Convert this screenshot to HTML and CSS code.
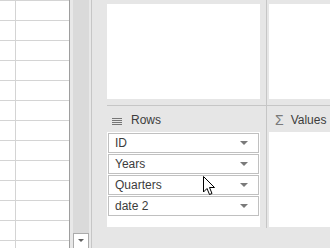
FILE: index.html
```html
<!DOCTYPE html>
<html lang="en">
<head>
    <meta charset="UTF-8">
    <title>PivotTable Fields</title>
    <link rel="stylesheet" href="styles.css">
</head>
<body>
    <div class="sheet">
        <div class="row"><div class="cell narrow"></div><div class="cell"></div></div>
        <div class="row"><div class="cell narrow"></div><div class="cell"></div></div>
        <div class="row"><div class="cell narrow"></div><div class="cell"></div></div>
        <div class="row"><div class="cell narrow"></div><div class="cell"></div></div>
        <div class="row"><div class="cell narrow"></div><div class="cell"></div></div>
        <div class="row"><div class="cell narrow"></div><div class="cell"></div></div>
        <div class="row"><div class="cell narrow"></div><div class="cell"></div></div>
        <div class="row"><div class="cell narrow"></div><div class="cell"></div></div>
        <div class="row"><div class="cell narrow"></div><div class="cell"></div></div>
        <div class="row"><div class="cell narrow"></div><div class="cell"></div></div>
        <div class="row"><div class="cell narrow"></div><div class="cell"></div></div>
        <div class="row"><div class="cell narrow"></div><div class="cell"></div></div>
        <div class="row"><div class="cell narrow"></div><div class="cell"></div></div>
    </div>

    <div class="scrollbar">
        <div class="track"></div>
        <div class="scroll-btn"><span class="arrow small"></span></div>
    </div>

    <div class="panel">
        <div class="areas top">
            <div class="drop-box"></div>
            <div class="divider"></div>
            <div class="drop-box"></div>
        </div>
        <div class="hline"></div>
        <div class="areas bottom">
            <div class="area">
                <div class="area-head">
                    <span class="rows-icon"><i></i><i></i><i></i><i></i></span>
                    <span>Rows</span>
                </div>
                <div class="field-list">
                    <div class="field">ID<span class="arrow"></span></div>
                    <div class="field">Years<span class="arrow"></span></div>
                    <div class="field">Quarters<span class="arrow"></span></div>
                    <div class="field">date 2<span class="arrow"></span></div>
                </div>
            </div>
            <div class="divider"></div>
            <div class="area grow">
                <div class="area-head">
                    <span class="sigma">&Sigma;</span>
                    <span class="label">Values</span>
                </div>
                <div class="field-list"></div>
            </div>
        </div>
    </div>

    <svg class="cursor" width="13" height="20" viewBox="0 0 13 20">
        <path d="M0.5 0.5 L0.5 16 L4 12.5 L6.5 18.5 L9 17.5 L6.5 11.5 L11.5 11.5 Z" fill="#fff" stroke="#000" stroke-width="1"/>
    </svg>
</body>
</html>
```

FILE: styles.css
```css
body {
    margin: 0;
    width: 330px;
    height: 248px;
    overflow: hidden;
    display: flex;
    font-family: "Segoe UI", "Liberation Sans", Arial, sans-serif;
    font-size: 12px;
    color: #3c3c3c;
    background-color: #e6e6e6;
}

/* spreadsheet on the left */
.sheet {
    flex: none;
    width: 69px;
    border-right: 1px solid #9e9e9e;
    background-color: #fff;
    overflow: hidden;
}
.row {
    display: flex;
    height: 19px;
    border-top: 1px solid #d4d4d4;
}
.cell {
    flex: 1;
}
.cell.narrow {
    flex: none;
    width: 15px;
    border-right: 1px solid #d4d4d4;
}

/* vertical scrollbar */
.scrollbar {
    flex: none;
    width: 16px;
    padding: 0 2px 0 3px;
    border-right: 1px solid #c6c6c6;
    background-color: #e8e8e8;
    display: flex;
    flex-direction: column;
}
.track {
    flex: 1;
    background-color: #dadada;
}
.scroll-btn {
    height: 9px;
    border: 1px solid #ababab;
    border-bottom: none;
    background-color: #fff;
    display: flex;
    justify-content: center;
    padding-top: 5px;
}

/* field areas panel */
.panel {
    flex: 1;
    min-width: 0;
    overflow: hidden;
    padding-left: 15px;
    display: flex;
    flex-direction: column;
}
.areas {
    display: flex;
}
.areas.top {
    height: 105px;
}
.areas.top .drop-box {
    margin-top: 4px;
    height: 95px;
    background-color: #fff;
}
.drop-box:first-child,
.area {
    flex: none;
    width: 153px;
}
.drop-box:last-child,
.area.grow {
    flex: 1;
    min-width: 0;
}
.divider {
    flex: none;
    width: 1px;
    margin: 0 2px 0 6px;
    background-color: #c6c6c6;
}
.areas.bottom {
    height: 122px;
}
.hline {
    height: 1px;
    background-color: #c6c6c6;
}
.area-head {
    height: 26px;
    display: flex;
    align-items: center;
    padding-top: 1px;
    box-sizing: border-box;
    white-space: nowrap;
}
.rows-icon {
    width: 10px;
    margin: 4px 9px 0 5px;
    display: flex;
    flex-direction: column;
    gap: 1px;
}
.rows-icon i {
    height: 1px;
    background-color: #767676;
}
.sigma {
    color: #7a7a7a;
    margin: 0 7px 0 6px;
    font-size: 14px;
}
.field-list {
    height: 95px;
    background-color: #fff;
    padding: 1px 1px 0;
    box-sizing: border-box;
    display: flex;
    flex-direction: column;
    gap: 1px;
}
.field {
    height: 20px;
    line-height: 18px;
    border: 1px solid #c0c0c0;
    box-sizing: border-box;
    padding-left: 6px;
    display: flex;
    justify-content: space-between;
    align-items: center;
}
.arrow {
    width: 0;
    height: 0;
    margin-right: 10px;
    border-left: 4px solid transparent;
    border-right: 4px solid transparent;
    border-top: 4px solid #7a7a7a;
}
.arrow.small {
    margin-right: 0;
    border-left-width: 3px;
    border-right-width: 3px;
    border-top-width: 3px;
    border-top-color: #606060;
}

/* mouse pointer over the list */
.cursor {
    position: absolute;
    left: 203px;
    top: 176px;
}
```
